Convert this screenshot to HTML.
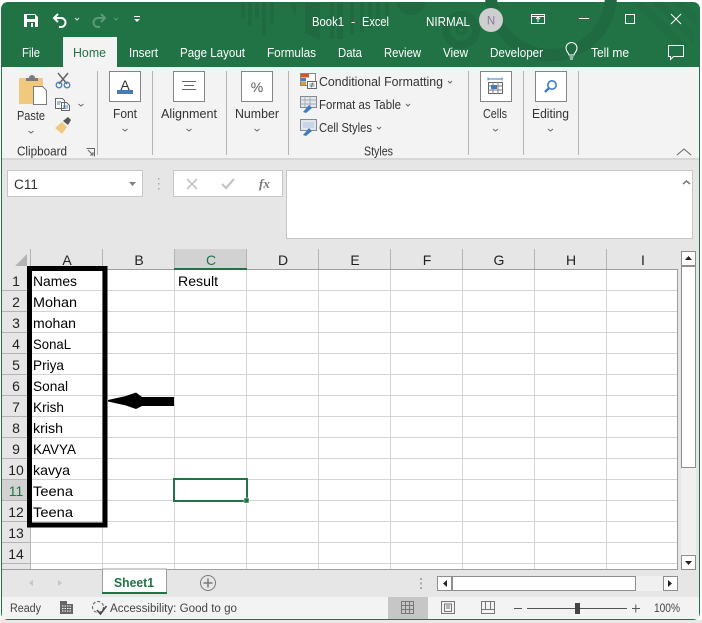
<!DOCTYPE html>
<html><head><meta charset="utf-8"><style>
html,body{margin:0;padding:0;background:#fff;width:702px;height:623px;overflow:hidden}
svg{display:block}
text{font-family:"Liberation Sans",sans-serif}
.t{font-size:12.5px;fill:#fff}
.r{font-size:12.5px;fill:#333}
.c{font-size:14px;fill:#000}
.h{font-size:14px;fill:#222;text-anchor:middle}
.n{font-size:14px;fill:#222;text-anchor:middle}
.s{font-size:11.5px;fill:#444}
</style></head><body>
<svg width="702" height="623" viewBox="0 0 702 623" xmlns="http://www.w3.org/2000/svg">
<rect width="702" height="623" fill="#fff"/>
<!-- window -->
<rect x="1" y="2" width="699" height="618" rx="7" fill="#217346"/>
<rect x="0" y="620" width="702" height="3" fill="#e8e8e8"/>
<rect x="2" y="67" width="697" height="552" fill="#e6e6e6"/>
<!-- title decoration -->
<g fill="#1f6a41">
<rect x="241" y="2" width="4" height="16"/><rect x="248" y="2" width="4" height="24"/><rect x="255" y="2" width="4" height="17"/><rect x="262" y="2" width="4" height="33"/><rect x="270" y="2" width="4" height="21"/>
<path d="M289 3h7v13z"/><path d="M305 3h15v37l-15-7z"/>
<rect x="330" y="2" width="4" height="37"/><rect x="337" y="2" width="6" height="37"/><rect x="350" y="2" width="4" height="32"/><rect x="360" y="2" width="4" height="30"/><rect x="368" y="2" width="4" height="26"/><rect x="376" y="2" width="4" height="22"/><rect x="385" y="2" width="4" height="16"/>
<path d="M397 2h28a14 13 0 0 1-28 0z"/>
<path d="M632 2h12l45 45h-12zM652 2h12l30 30v12zM672 2h12l13 13v12z" opacity=".6"/>
</g>
<g fill="none" stroke="#1f6a41">
<circle cx="461" cy="30" r="15" stroke-width="8"/><circle cx="461" cy="30" r="4" stroke-width="3"/>
<circle cx="551" cy="-5" r="60" stroke-width="12"/>
</g>
<!-- QAT -->
<path d="M24 14h11l3 3v10H24z" fill="#fff"/><rect x="27" y="15" width="8" height="4" fill="#217346"/><rect x="27" y="22" width="8" height="5" fill="#217346"/><rect x="31" y="23" width="2" height="4" fill="#fff"/>
<path d="M58 14l-4 4 4 4M54 18h7a4.5 4.5 0 0 1 0 9h-2" fill="none" stroke="#fff" stroke-width="2"/>
<path d="M75 18l2 2 2-2" fill="none" stroke="#d5e5db" stroke-width="1"/>
<path d="M101 14l4 4-4 4M105 18h-7a4.5 4.5 0 0 0 0 9h2" fill="none" stroke="#5d9a79" stroke-width="2"/>
<path d="M114 18l2 2 2-2" fill="none" stroke="#5d9a79" stroke-width="1"/>
<rect x="134" y="16" width="6" height="1" fill="#fff"/><path d="M134 19h6l-3 3z" fill="#fff"/>
<!-- title -->
<text x="312" y="26" class="t" textLength="32" lengthAdjust="spacingAndGlyphs">Book1</text>
<text x="351" y="26" class="t">-</text>
<text x="362" y="26" class="t" textLength="27" lengthAdjust="spacingAndGlyphs">Excel</text>
<text x="426" y="26" class="t" textLength="44" lengthAdjust="spacingAndGlyphs">NIRMAL</text>
<circle cx="491" cy="20" r="12" fill="#cfcfcf"/>
<text x="491" y="24.5" font-size="11.5" fill="#8a7a9a" text-anchor="middle">N</text>
<!-- window controls -->
<rect x="531.5" y="14.5" width="13" height="9" fill="none" stroke="#fff"/><path d="M531 16.5h14M538 22v-5M536 19l2-2 2 2" fill="none" stroke="#fff"/>
<rect x="579" y="18" width="10" height="1" fill="#fff"/>
<rect x="625.5" y="14.5" width="9" height="9" fill="none" stroke="#fff"/>
<path d="M671 14l10 10M681 14l-10 10" stroke="#fff" fill="none"/>
<!-- tabs -->
<rect x="63" y="37" width="54" height="31" fill="#f3f3f3"/>
<text x="22" y="57" class="t" textLength="18" lengthAdjust="spacingAndGlyphs">File</text>
<text x="73" y="57" class="t" style="fill:#217346" textLength="33" lengthAdjust="spacingAndGlyphs">Home</text>
<text x="129" y="57" class="t" textLength="29" lengthAdjust="spacingAndGlyphs">Insert</text>
<text x="180" y="57" class="t" textLength="65" lengthAdjust="spacingAndGlyphs">Page Layout</text>
<text x="267" y="57" class="t" textLength="49" lengthAdjust="spacingAndGlyphs">Formulas</text>
<text x="338" y="57" class="t" textLength="24" lengthAdjust="spacingAndGlyphs">Data</text>
<text x="384" y="57" class="t" textLength="37" lengthAdjust="spacingAndGlyphs">Review</text>
<text x="443" y="57" class="t" textLength="25" lengthAdjust="spacingAndGlyphs">View</text>
<text x="490" y="57" class="t" textLength="53" lengthAdjust="spacingAndGlyphs">Developer</text>
<text x="591" y="57" class="t" textLength="38" lengthAdjust="spacingAndGlyphs">Tell me</text>
<path d="M569 55c0-2-3-3-3-7a5.5 5.5 0 0 1 11 0c0 4-3 5-3 7zM569.5 57h4M570 59h3" fill="none" stroke="#fff"/>
<path d="M668.5 45.5h15v11h-10l-3 3v-3h-2z" fill="none" stroke="#fff"/>
<!-- ribbon -->
<rect x="2" y="67" width="697" height="91" fill="#f3f3f3"/>
<rect x="2" y="158" width="697" height="2" fill="#d6d6d6"/>
<g fill="#b4b4b4">
<rect x="97" y="71" width="1" height="84"/><rect x="152" y="71" width="1" height="84"/><rect x="226" y="71" width="1" height="84"/><rect x="288" y="71" width="1" height="84"/><rect x="468" y="71" width="1" height="84"/><rect x="523" y="71" width="1" height="84"/><rect x="578" y="71" width="1" height="84"/>
</g>
<!-- paste -->
<rect x="19" y="78" width="24" height="26" rx="1" fill="#f0c97f"/>
<path d="M26 81v-3h3a3 3 0 0 1 6 0h3v3z" fill="#7b7b7b"/>
<path d="M33.5 86.500h9l4 4v14h-13z" fill="#fff" stroke="#7b7b7b"/>
<path d="M58 73l9 11M68 73l-9 11" stroke="#666" stroke-width="1.5" fill="none"/>
<circle cx="59" cy="85" r="2.8" fill="none" stroke="#4a7fbf" stroke-width="1.3"/><circle cx="67" cy="85" r="2.8" fill="none" stroke="#4a7fbf" stroke-width="1.3"/>
<path d="M55.5 98.500h7l2 2v8h-9zM61.5 102.500h5l3 3v5h-8z" fill="#fff" stroke="#666"/><path d="M57 102h4M57 104h3M63 106h5M63 108h5" stroke="#4a7fbf"/>
<path d="M55 128l7-6 5 5-5 7z" fill="#f0c97f"/><path d="M63 121l5-4 3 3-3 5z" fill="#555"/>
<path d="M78.5 104l2.500 2 2.500-2M28.500 131l2.500 2 2.500-2" fill="none" stroke="#666"/>
<text x="17" y="120" class="r" textLength="28" lengthAdjust="spacingAndGlyphs">Paste</text>
<text x="17" y="155.5" class="r" textLength="50" lengthAdjust="spacingAndGlyphs">Clipboard</text>
<path d="M86.500 148.500h8v8M88 150l5 5M90 155h3v-3" fill="none" stroke="#666"/>
<!-- font -->
<rect x="109.5" y="71.5" width="31" height="30" fill="#fff" stroke="#858585"/>
<text x="125" y="90" font-size="14" fill="#333" text-anchor="middle">A</text>
<rect x="117" y="90" width="16" height="4" fill="#4a7ab5"/>
<text x="113" y="118" class="r" textLength="24" lengthAdjust="spacingAndGlyphs">Font</text>
<path d="M122.500 129l2.500 2 2.500-2" fill="none" stroke="#666"/>
<!-- alignment -->
<rect x="173.5" y="71.5" width="31" height="30" fill="#fff" stroke="#858585"/>
<path d="M182 81.500h14M184 85.500h10M182 89.500h14" stroke="#666"/>
<text x="161" y="118" class="r" textLength="56" lengthAdjust="spacingAndGlyphs">Alignment</text>
<path d="M186.500 129l2.500 2 2.500-2" fill="none" stroke="#666"/>
<!-- number -->
<rect x="241.5" y="71.5" width="31" height="30" fill="#fff" stroke="#858585"/>
<text x="257" y="92" font-size="14" fill="#555" text-anchor="middle">%</text>
<text x="235" y="118" class="r" textLength="44" lengthAdjust="spacingAndGlyphs">Number</text>
<path d="M254.500 129l2.500 2 2.500-2" fill="none" stroke="#666"/>
<!-- styles -->
<rect x="300.5" y="73.5" width="15" height="12" fill="#fff" stroke="#888"/><rect x="301" y="74" width="8" height="3.5" fill="#d9542b"/><rect x="301" y="78" width="5" height="3.5" fill="#4a7fbf"/><rect x="301" y="82" width="5" height="3" fill="#e39a2d"/>
<rect x="307.5" y="81.5" width="9" height="7" fill="#fff" stroke="#666"/><path d="M309.5 84h5M309.5 86h5M313 82.500l-2 5" stroke="#555" stroke-width=".7" fill="none"/>
<rect x="300.5" y="96.5" width="16" height="11" fill="#dfe7f1" stroke="#888"/><path d="M300 100h17M300 104h17M305 96v12M310 96v12" stroke="#999" stroke-width=".7"/><path d="M303 112l6-7 3 3-6 5z" fill="#3f7cbf"/>
<rect x="300.5" y="119.5" width="16" height="11" fill="#dfe7f1" stroke="#888"/><rect x="303" y="122" width="11" height="6" fill="#c7d5e6"/><path d="M303 135l6-7 3 3-6 5z" fill="#3f7cbf"/>
<text x="319" y="86" class="r" textLength="124" lengthAdjust="spacingAndGlyphs">Conditional Formatting</text>
<text x="319" y="109" class="r" textLength="82" lengthAdjust="spacingAndGlyphs">Format as Table</text>
<text x="319" y="132" class="r" textLength="53" lengthAdjust="spacingAndGlyphs">Cell Styles</text>
<path d="M448 81l2 2 2-2M406 104l2 2 2-2M377 127l2 2 2-2" fill="none" stroke="#666"/>
<text x="364" y="155.5" class="r" textLength="29" lengthAdjust="spacingAndGlyphs">Styles</text>
<!-- cells -->
<rect x="480.5" y="71.5" width="31" height="30" fill="#fff" stroke="#858585"/>
<rect x="488.5" y="82.5" width="14" height="11" fill="#fff" stroke="#666"/><path d="M488 86h15M488 90h15M493 82v12M498 82v12" stroke="#777" stroke-width=".9"/><rect x="491" y="85" width="6" height="4" fill="#3f7cbf"/>
<path d="M488 79h14M488 77.500v3M502 77.500v3" stroke="#3f7cbf"/>
<text x="483" y="118" class="r" textLength="24" lengthAdjust="spacingAndGlyphs">Cells</text>
<path d="M493 129l2.500 2 2.500-2" fill="none" stroke="#666"/>
<!-- editing -->
<rect x="535.5" y="71.5" width="31" height="30" fill="#fff" stroke="#858585"/>
<circle cx="552" cy="85" r="4.2" fill="none" stroke="#3f7cbf" stroke-width="1.6"/><path d="M549 88l-4 4" stroke="#3f7cbf" stroke-width="2.4"/>
<text x="532" y="118" class="r" textLength="37" lengthAdjust="spacingAndGlyphs">Editing</text>
<path d="M548 129l2.500 2 2.500-2" fill="none" stroke="#666"/>
<path d="M677 155l7-6 7 6" fill="none" stroke="#666"/>
<!-- formula bar -->
<rect x="7.5" y="170.5" width="135" height="26" fill="#fff" stroke="#c6c6c6"/>
<text x="14" y="189" font-size="13.5" fill="#333" textLength="24" lengthAdjust="spacingAndGlyphs">C11</text>
<path d="M129 182h7l-3.500 4z" fill="#808080"/>
<path d="M158 178h1.500v1.500H158zM158 183h1.500v1.500H158zM158 188h1.500v1.500H158z" fill="#aaa"/>
<rect x="173.5" y="170.5" width="109" height="26" fill="#fff" stroke="#c6c6c6"/>
<path d="M187 179l10 10M197 179l-10 10" stroke="#c4c4c4" stroke-width="1.6" fill="none"/>
<path d="M222 184l4 4 8-9" stroke="#c4c4c4" stroke-width="2.2" fill="none"/>
<text x="259" y="188" font-size="13" font-style="italic" font-weight="bold" fill="#777" style="font-family:'Liberation Serif',serif">fx</text>
<rect x="286.5" y="170.5" width="406" height="68" fill="#fff" stroke="#c6c6c6"/>
<path d="M683 184l3.500-3 3.500 3" fill="none" stroke="#777" stroke-width="1.5"/>
<!-- grid -->
<rect x="31" y="270" width="647" height="299" fill="#fff"/>
<g fill="#d4d4d4">
<rect x="102" y="270" width="1" height="299"/><rect x="174" y="270" width="1" height="299"/><rect x="246" y="270" width="1" height="299"/><rect x="318" y="270" width="1" height="299"/><rect x="390" y="270" width="1" height="299"/><rect x="462" y="270" width="1" height="299"/><rect x="534" y="270" width="1" height="299"/><rect x="606" y="270" width="1" height="299"/>
<rect x="31" y="290" width="647" height="1"/><rect x="31" y="311" width="647" height="1"/><rect x="31" y="332" width="647" height="1"/><rect x="31" y="353" width="647" height="1"/><rect x="31" y="374" width="647" height="1"/><rect x="31" y="395" width="647" height="1"/><rect x="31" y="416" width="647" height="1"/><rect x="31" y="437" width="647" height="1"/><rect x="31" y="458" width="647" height="1"/><rect x="31" y="479" width="647" height="1"/><rect x="31" y="500" width="647" height="1"/><rect x="31" y="521" width="647" height="1"/><rect x="31" y="542" width="647" height="1"/><rect x="31" y="563" width="647" height="1"/>
</g>
<!-- headers -->
<rect x="174" y="249" width="73" height="20" fill="#d2d2d2"/>
<rect x="2" y="480" width="28" height="21" fill="#d2d2d2"/>
<g fill="#b4b4b4">
<rect x="30" y="249" width="1" height="320"/><rect x="102" y="249" width="1" height="20"/><rect x="174" y="249" width="1" height="20"/><rect x="246" y="249" width="1" height="20"/><rect x="318" y="249" width="1" height="20"/><rect x="390" y="249" width="1" height="20"/><rect x="462" y="249" width="1" height="20"/><rect x="534" y="249" width="1" height="20"/><rect x="606" y="249" width="1" height="20"/>
<rect x="2" y="290" width="28" height="1"/><rect x="2" y="311" width="28" height="1"/><rect x="2" y="332" width="28" height="1"/><rect x="2" y="353" width="28" height="1"/><rect x="2" y="374" width="28" height="1"/><rect x="2" y="395" width="28" height="1"/><rect x="2" y="416" width="28" height="1"/><rect x="2" y="437" width="28" height="1"/><rect x="2" y="458" width="28" height="1"/><rect x="2" y="479" width="28" height="1"/><rect x="2" y="500" width="28" height="1"/><rect x="2" y="521" width="28" height="1"/><rect x="2" y="542" width="28" height="1"/><rect x="2" y="563" width="28" height="1"/>
</g>
<rect x="31" y="269" width="647" height="1" fill="#9e9e9e"/>
<rect x="174" y="268" width="73" height="2" fill="#217346"/>
<rect x="677" y="269" width="1" height="300" fill="#9e9e9e"/>
<path d="M15 266l12-12v12z" fill="#b4b4b4"/>
<text x="67" y="265" class="h">A</text><text x="139" y="265" class="h">B</text><text x="211" y="265" class="h" style="fill:#217346">C</text><text x="283" y="265" class="h">D</text><text x="355" y="265" class="h">E</text><text x="427" y="265" class="h">F</text><text x="499" y="265" class="h">G</text><text x="571" y="265" class="h">H</text><text x="643" y="265" class="h">I</text>
<text x="16" y="286" class="n">1</text><text x="16" y="307" class="n">2</text><text x="16" y="328" class="n">3</text><text x="16" y="349" class="n">4</text><text x="16" y="370" class="n">5</text><text x="16" y="391" class="n">6</text><text x="16" y="412" class="n">7</text><text x="16" y="433" class="n">8</text><text x="16" y="454" class="n">9</text><text x="16" y="475" class="n">10</text><text x="16" y="496" class="n" style="fill:#217346">11</text><text x="16" y="517" class="n">12</text><text x="16" y="538" class="n">13</text><text x="16" y="559" class="n">14</text>
<!-- cells -->
<text x="33" y="286" class="c" textLength="44" lengthAdjust="spacingAndGlyphs">Names</text>
<text x="33" y="307" class="c" textLength="44" lengthAdjust="spacingAndGlyphs">Mohan</text>
<text x="33" y="328" class="c" textLength="43" lengthAdjust="spacingAndGlyphs">mohan</text>
<text x="33" y="349" class="c" textLength="38" lengthAdjust="spacingAndGlyphs">SonaL</text>
<text x="33" y="370" class="c" textLength="31" lengthAdjust="spacingAndGlyphs">Priya</text>
<text x="33" y="391" class="c" textLength="35" lengthAdjust="spacingAndGlyphs">Sonal</text>
<text x="33" y="412" class="c" textLength="31" lengthAdjust="spacingAndGlyphs">Krish</text>
<text x="33" y="433" class="c" textLength="30" lengthAdjust="spacingAndGlyphs">krish</text>
<text x="33" y="454" class="c" textLength="43" lengthAdjust="spacingAndGlyphs">KAVYA</text>
<text x="33" y="475" class="c" textLength="37" lengthAdjust="spacingAndGlyphs">kavya</text>
<text x="33" y="496" class="c" textLength="40" lengthAdjust="spacingAndGlyphs">Teena</text>
<text x="33" y="517" class="c" textLength="40" lengthAdjust="spacingAndGlyphs">Teena</text>
<text x="178" y="286" class="c" textLength="40" lengthAdjust="spacingAndGlyphs">Result</text>
<!-- selection -->
<rect x="174" y="479" width="73" height="22" fill="none" stroke="#217346" stroke-width="2"/>
<rect x="244" y="498" width="5" height="5" fill="#217346" stroke="#fff" stroke-width=".5"/>
<!-- annotation -->
<rect x="29.5" y="268.5" width="75.500" height="256.500" fill="none" stroke="#000" stroke-width="5"/>
<path d="M108 400l18-4 10-3.500 6 4.500h32v9h-32l-6 3-10-3.500-18-4z" fill="#000"/>
<!-- vertical scrollbar -->
<rect x="678" y="249" width="21" height="320" fill="#e6e6e6"/>
<rect x="681" y="266" width="15" height="303" fill="#f0f0f0"/>
<rect x="681.5" y="251.5" width="14" height="14" fill="#fff" stroke="#8e8e8e"/>
<path d="M685 260h7l-3.500-4z" fill="#222"/>
<rect x="681.5" y="266.5" width="14" height="201" fill="#fff" stroke="#8e8e8e"/>
<rect x="681.5" y="555.5" width="14" height="14" fill="#fff" stroke="#8e8e8e"/>
<path d="M685 561h7l-3.500 4z" fill="#222"/>
<!-- sheet tabs -->
<rect x="2" y="569" width="676" height="1" fill="#9e9e9e"/>
<rect x="102.5" y="569" width="64" height="24" fill="#fff" stroke="#9e9e9e"/>
<rect x="102" y="592" width="65" height="2" fill="#217346"/>
<text x="114" y="587" font-size="13" font-weight="bold" fill="#217346" textLength="40" lengthAdjust="spacingAndGlyphs">Sheet1</text>
<circle cx="208" cy="583" r="7.5" fill="none" stroke="#7a7a7a"/>
<path d="M203.5 583h9M208 578.500v9" stroke="#7a7a7a" stroke-width="1.5"/>
<path d="M33 580l-4 3 4 3zM58 580l4 3-4 3z" fill="#c6c6c6"/>
<path d="M420 578h2v2h-2zM420 582.500h2v2h-2zM420 587h2v2h-2z" fill="#aaa"/>
<rect x="636" y="576" width="27" height="15" fill="#f0f0f0"/>
<rect x="437.5" y="576.5" width="14" height="14" fill="#fff" stroke="#8e8e8e"/><path d="M447 580v7l-4-3.500z" fill="#222"/>
<rect x="452.5" y="576.5" width="183" height="14" fill="#fff" stroke="#8e8e8e"/>
<rect x="663.5" y="576.5" width="14" height="14" fill="#fff" stroke="#8e8e8e"/><path d="M668 580v7l4-3.500z" fill="#222"/>
<!-- status bar -->
<rect x="2" y="597" width="697" height="22" fill="#f3f3f3"/>
<text x="10" y="612" class="s" textLength="31" lengthAdjust="spacingAndGlyphs">Ready</text>
<path d="M60 601h7v3h6v10H60z" fill="#666"/><path d="M62 606h9M62 608.500h9M62 611h9" stroke="#fff" stroke-dasharray="1.5 1"/>
<circle cx="98" cy="607" r="5.5" fill="none" stroke="#555" stroke-dasharray="3 2"/>
<path d="M97 610l3.500 4 6-8" fill="none" stroke="#444" stroke-width="1.5"/>
<text x="110" y="612" class="s" textLength="127" lengthAdjust="spacingAndGlyphs">Accessibility: Good to go</text>
<rect x="388" y="597" width="40" height="22" fill="#c6c6c6"/>
<path d="M401.5 601.500h12v12h-12zM405.5 601.500v12M409.500 601.500v12M401.500 605.500h12M401.500 609.500h12" fill="none" stroke="#777"/>
<rect x="441.5" y="601.5" width="13" height="12" fill="none" stroke="#777"/><rect x="444.5" y="604" width="7" height="7.5" fill="none" stroke="#777"/><path d="M446 606h4M446 608h4" stroke="#777"/>
<path d="M481.5 601.500h13v12h-13zM481.500 609.500h13M485.500 601.500v8M490.500 601.500v8" fill="none" stroke="#777"/>
<rect x="514" y="608" width="8" height="1" fill="#555"/>
<rect x="527" y="608" width="100" height="1" fill="#555"/>
<rect x="575" y="603" width="5" height="11" fill="#444"/>
<path d="M632 608.500h8M635.800 604.500v8" stroke="#555"/>
<text x="654" y="612" class="s" textLength="26" lengthAdjust="spacingAndGlyphs">100%</text>
</svg>
</body></html>
